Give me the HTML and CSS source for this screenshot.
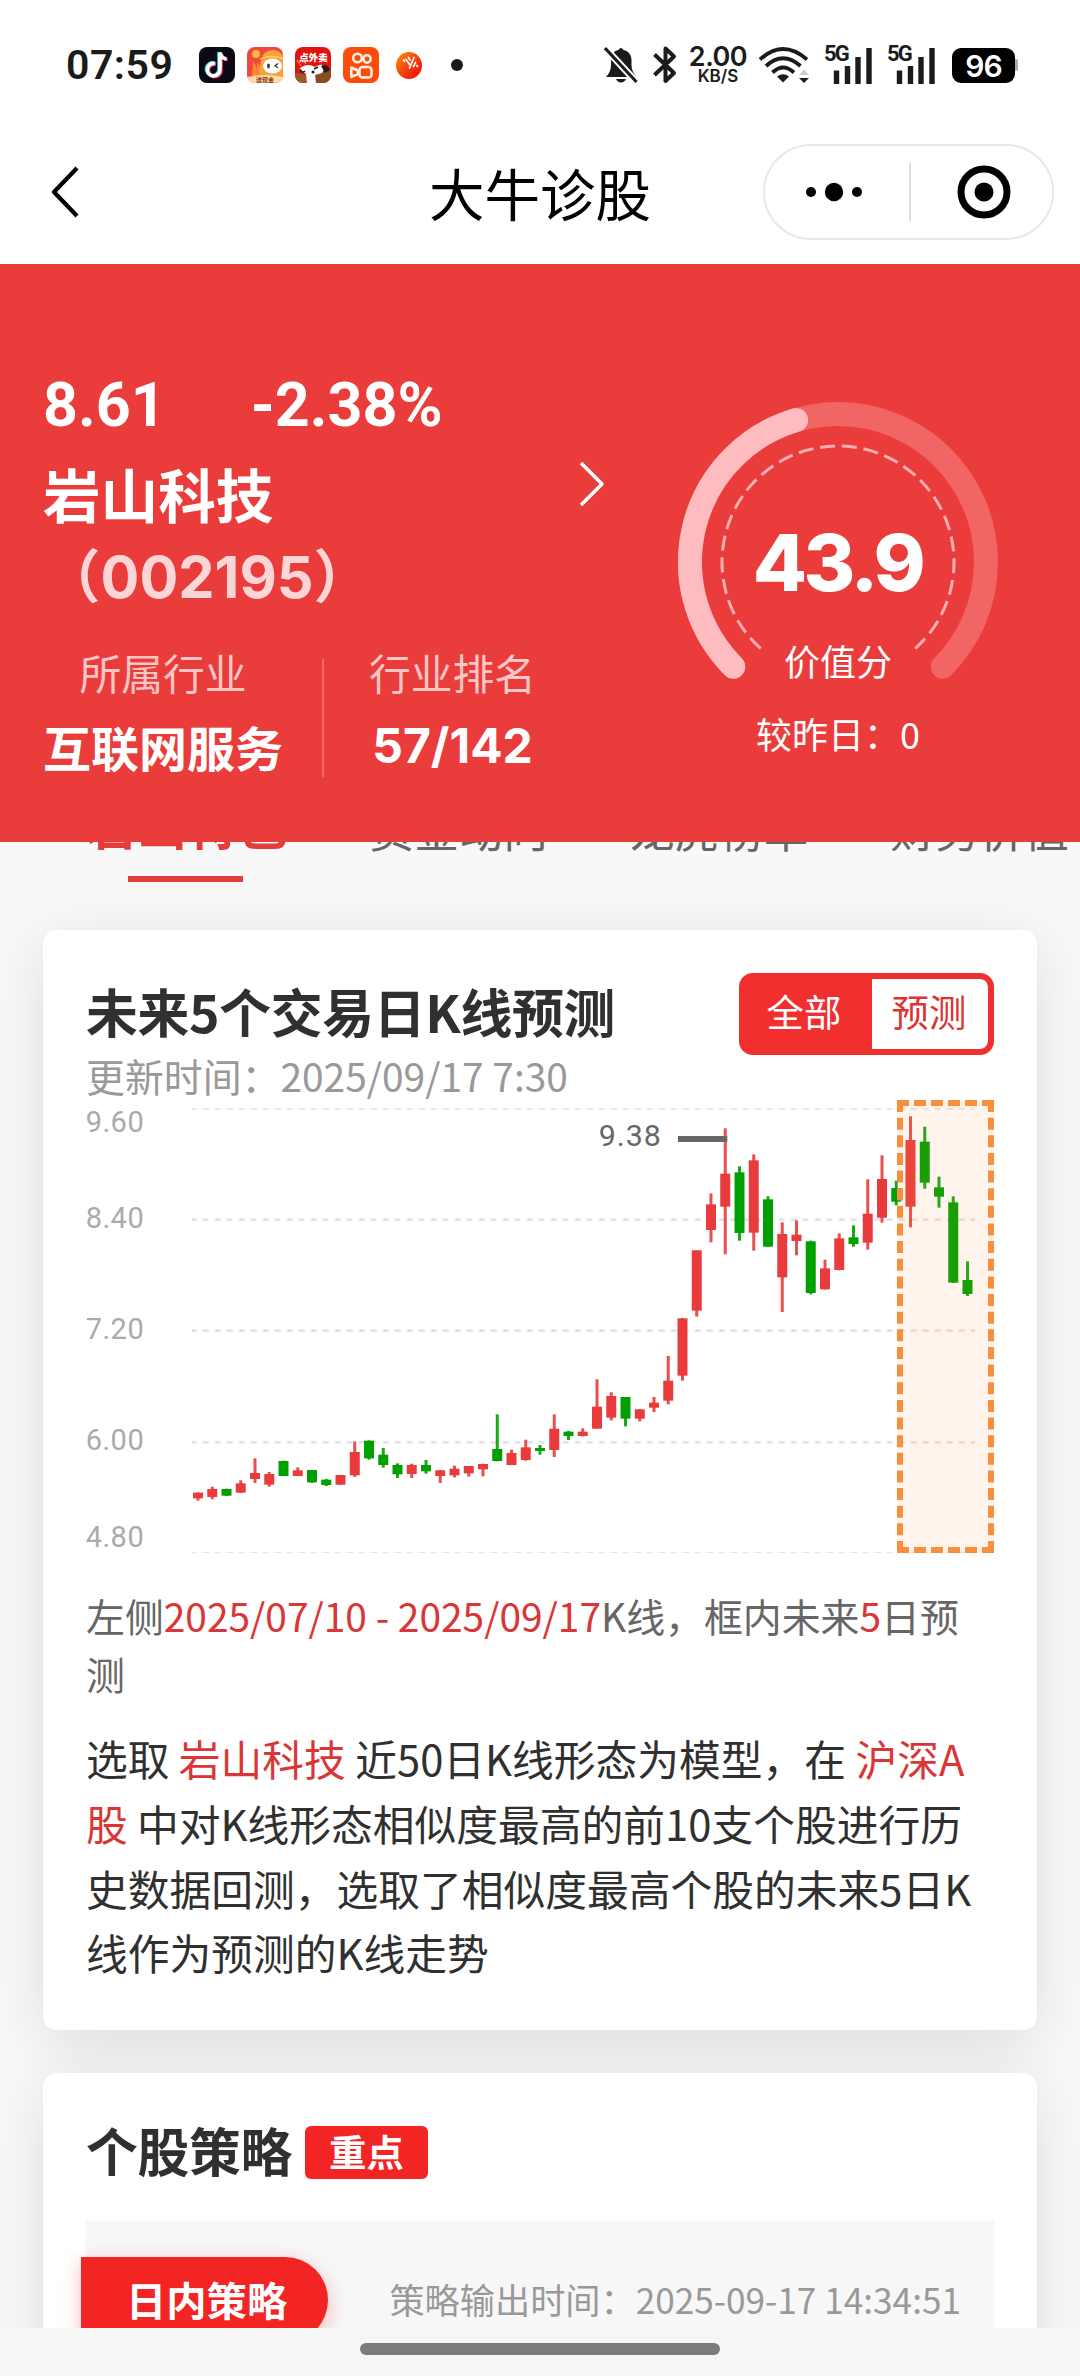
FILE: index.html
```html
<!DOCTYPE html>
<html lang="zh-CN">
<head>
<meta charset="utf-8">
<title>大牛诊股</title>
<link rel="stylesheet" href="styles.css">
</head>
<body>
<div class="screen">
  <header class="status">
    <span class="clock">07:59</span>
    <div class="apps">
      <svg class="app" viewBox="0 0 36 36"><rect width="36" height="36" rx="8" fill="#0b0a14"/><g fill="none" stroke-width="3.6"><path d="M16 16.500a6.300 6.300 0 1 0 5 6.200V5.500c.7 4 3 6 6.500 6.500" stroke="#29e3e3" transform="translate(-1 -.5)"/><path d="M16 16.500a6.300 6.300 0 1 0 5 6.200V5.500c.7 4 3 6 6.500 6.500" stroke="#f5325b" transform="translate(1 .8)"/><path d="M16 16.500a6.300 6.300 0 1 0 5 6.200V5.500c.7 4 3 6 6.500 6.500" stroke="#fff"/></g></svg>
      <svg class="app" viewBox="0 0 36 36"><defs><clipPath id="r"><rect width="36" height="36" rx="8"/></clipPath></defs><g clip-path="url(#r)"><rect width="36" height="36" fill="#f0473f"/><path d="M14 14q2-11 12-11 10 1 12 11v18H10z" fill="#f9a13c"/><path d="M6 14l3 5v10H5zM10 15l3 4v9h-4z" fill="#f78b33"/><circle cx="9" cy="7" r="4" fill="#ffb63d"/><path d="M13 12q12-5 24 0" fill="none" stroke="#fbd25e" stroke-width="1.500"/><ellipse cx="25.500" cy="19" rx="9.500" ry="7.500" fill="#fff"/><ellipse cx="21.500" cy="19" rx="1.400" ry="2.400" fill="#333"/><path d="M31 16.500l-3 2.300 3 2" fill="none" stroke="#333" stroke-width="1.300"/><path d="M0 30q18-4 36 0v6H0z" fill="#fddca0"/><text x="18" y="35" text-anchor="middle" class="app-cash">送现金</text></g></svg>
      <svg class="app" viewBox="0 0 36 36"><g clip-path="url(#r)"><rect width="36" height="36" fill="#e3120f"/><path d="M0 26l12 2 10 8H0z" fill="#9a5a2c"/><path d="M20 27l16-5v14H18z" fill="#8a4c22"/><path d="M4 22q8-7 16-2 8-5 10 1l-3 5-7 2 1 8H12l-1-9z" fill="#fff"/><path d="M26 19q6-3 9 4l-5 3z" fill="#2b1a16"/><path d="M19 22l4-2M5 22q2 5 5 2" stroke="#221" stroke-width="1.500" fill="none"/><circle cx="18" cy="25" r="1.500" fill="#221"/><path d="M2 13l4 6M9 14l2 3" stroke="#f4a13a" stroke-width="1.300"/><text x="18.500" y="13.500" text-anchor="middle" class="app-food">点外卖</text></g></svg>
      <svg class="app" viewBox="0 0 36 36"><rect width="36" height="36" rx="8" fill="#fd4b0b"/><g fill="none" stroke="#fff3e6" stroke-width="2.500"><circle cx="14.500" cy="11" r="4.300"/><circle cx="24" cy="12" r="3.700"/><rect x="16.500" y="20" width="12" height="10.500" rx="3"/><path d="M8.300 20.500v9.500l6.500-3v-3.500z" stroke-linejoin="round"/></g></svg>
      <svg class="app app-wave" viewBox="0 0 26 27"><defs><linearGradient id="o" x1="0" y1="0" x2="1" y2="1"><stop offset=".15" stop-color="#fb7a10"/><stop offset=".75" stop-color="#f0200c"/></linearGradient></defs><ellipse cx="13" cy="13.500" rx="13" ry="13.500" fill="url(#o)"/><path d="M7.500 8l1 1.300M10 7.500l3.500 5M13.500 16L18 5.500M14 8l-1.500-2.500M17.500 14.500l2-4M21 13.500l.5 1" stroke="#fff" stroke-width="1.700" stroke-linecap="round" fill="none"/></svg>
    </div>
    <span class="more-dot"></span>
    <div class="system">
      <svg class="bell" viewBox="0 0 34 36" width="34" height="36"><g fill="#1b1b1b"><path d="M17 1c1 0 2 1 2.500 2 5 1 8 5 8 10v5c0 5 2 8 5 12H2c3-3 5-7 5-12v-5C7 8 9 4 14.500 3 15 2 16 1 17 1z"/><path d="M12 32h10c-1 2.500-3 3.500-5 3.500s-4-1-5-3.500z"/></g><path d="M1 1L32.500 35" stroke="#fff" stroke-width="7"/><path d="M1 1L32.500 35" stroke="#1b1b1b" stroke-width="3"/></svg>
      <svg class="bt" viewBox="0 0 24 38" width="24" height="38"><path d="M1.500 8.500L21 27 12.500 35V2.500L21 10.500 1.500 29" fill="none" stroke="#1b1b1b" stroke-width="4" stroke-linejoin="round"/></svg>
      <span class="speed"><b>2.00</b><i>KB/S</i></span>
      <svg class="wifi" viewBox="0 0 50 36" width="50" height="36"><g fill="none" stroke="#1b1b1b" stroke-width="3.800"><path d="M1 12.500Q24 -8.500 48 12.500"/><path d="M7 19Q24 3.500 41.500 19"/><path d="M13.500 25.500Q24 15.500 35 25.500"/></g><path d="M18 29.500q6-4.500 12 0l-6 6z" fill="#1b1b1b"/><path d="M40 28l5-5.500 5 5.500z" fill="#ccc"/><path d="M40 31h10l-5 5z" fill="#1b1b1b"/></svg>
      <span class="signal"><em>5G</em><svg viewBox="0 0 48 37" width="48" height="37"><path d="M12.500 23.500V37M23.500 19V37M34 10V37M45 1V37" stroke="#1b1b1b" stroke-width="5.400"/></svg></span>
      <span class="signal"><em>5G</em><svg viewBox="0 0 48 37" width="48" height="37"><path d="M12.500 23.500V37M23.500 19V37M34 10V37M45 1V37" stroke="#1b1b1b" stroke-width="5.400"/></svg></span>
      <span class="battery">96</span><span class="nub"></span>
    </div>
  </header>

  <nav class="nav">
    <svg class="back" viewBox="0 0 28 52" width="28" height="52"><path d="M26 2L3 26l23 24" fill="none" stroke="#000" stroke-width="4.200" stroke-linejoin="round"/></svg>
    <h1 class="nav-title">大牛诊股</h1>
    <div class="capsule">
      <svg viewBox="0 0 56 20" width="56" height="20"><circle cx="5" cy="10" r="5"/><circle cx="28" cy="10" r="9.200"/><circle cx="51" cy="10" r="5"/></svg>
      <span class="capsule-line"></span>
      <svg viewBox="0 0 54 54" width="54" height="54"><circle cx="27" cy="27" r="23" fill="none" stroke="#000" stroke-width="7"/><circle cx="27" cy="27" r="9.500"/></svg>
    </div>
  </nav>

  <section class="hero">
    <div class="stock">
      <div class="quote"><span class="price">8.61</span><span class="change">-2.38%</span></div>
      <div class="name-row">
        <div class="name">岩山科技<br><span class="code">（<span class="code-num">002195</span>）</span></div>
        <svg class="go" viewBox="0 0 26 46" width="26" height="46"><path d="M2 2l21 21L2 44" fill="none" stroke="#fff" stroke-width="3.500" stroke-linejoin="round"/></svg>
      </div>
      <div class="stats">
        <div class="stat"><span class="stat-label">所属行业</span><b class="stat-value">互联网服务</b></div>
        <span class="stat-line"></span>
        <div class="stat"><span class="stat-label">行业排名</span><b class="stat-value stat-rank">57/142</b></div>
      </div>
    </div>
    <div class="gauge">
      <svg class="gauge-ring" viewBox="-160 -160 320 320" width="320" height="320" fill="none">
        <path d="M-104.700 104.700A148 148 0 1 1 104.700 104.700" stroke="#f16564" stroke-width="24" stroke-linecap="round"/>
        <path d="M-104.700 104.700A148 148 0 0 1 -41.800 -142" stroke="#febbc0" stroke-width="24" stroke-linecap="round"/>
        <path d="M-77.300 86.500A116 116 0 1 1 77.300 86.500" stroke="#fdaeb0" stroke-width="3" stroke-dasharray="15 6.800"/>
      </svg>
      <div class="gauge-text">
        <b class="score">43.9</b>
        <span class="score-label">价值分</span>
        <span class="score-diff">较昨日：0</span>
      </div>
    </div>
  </section>

  <main class="content">
    <div class="tabs">
      <span class="tab tab-on">岩山特色</span>
      <span class="tab">资金动向</span>
      <span class="tab">龙虎榜单</span>
      <span class="tab">财务价值</span>
    </div>

    <section class="card forecast">
      <div class="card-head">
        <div>
          <h2 class="card-title">未来5个交易日K线预测</h2>
          <p class="updated">更新时间：2025/09/17 7:30</p>
        </div>
        <div class="toggle"><span class="toggle-on">全部</span><span class="toggle-off">预测</span></div>
      </div>
      <div class="chart">
        <svg id="kline" viewBox="0 60 2724 1359" width="908" height="453">
          <g class="grid">
            <path class="thin" d="M318 87H2667M318 1417H2667"/>
            <path d="M318 419H2667M318 752H2667M318 1087H2667"/>
          </g>
          <g class="axis">
            <text x="-1" y="155">9.60</text><text x="-1" y="443">8.40</text><text x="-1" y="778">7.20</text><text x="-1" y="1111">6.00</text><text x="-1" y="1400">4.80</text>
          </g>
          <g id="candles"></g>
          <text class="peak" x="1538" y="199">9.38</text>
          <path class="peak-line" d="M1776 177H1924"/>
        </svg>
        <div class="predict-box"></div>
      </div>
      <p class="range">左侧<em>2025/07/10 - 2025/09/17</em>K线，框内未来<em>5</em>日预<br>测</p>
      <p class="explain">选取 <em>岩山科技</em> 近50日K线形态为模型，在 <em>沪深A<br>股</em> 中对K线形态相似度最高的前10支个股进行历<br>史数据回测，选取了相似度最高个股的未来5日K<br>线作为预测的K线走势</p>
    </section>

    <section class="card strategy">
      <div class="strategy-head"><h2 class="card-title">个股策略</h2><span class="badge">重点</span></div>
      <div class="panel">
        <span class="ribbon">日内策略</span>
        <span class="panel-time">策略输出时间：2025-09-17 14:34:51</span>
      </div>
    </section>
  </main>

  <footer class="home"><span class="home-pill"></span></footer>
</div>
<script src="chart.js"></script>
</body>
</html>
```

FILE: styles.css
```css
* { box-sizing: border-box; margin: 0; padding: 0; }
body { font-family: "Noto Sans CJK SC", sans-serif; color: #333; background: #fff; }
em, i { font-style: normal; }
svg { display: block; flex: none; }
.screen { width: 1080px; height: 2376px; display: flex; flex-direction: column; overflow: hidden; white-space: nowrap; }

/* status bar */
.status { height: 128px; display: flex; align-items: center; padding: 2px 62px 0 66px; color: #1b1b1b; flex: none; }
.clock { font: 600 41px/48px Roboto, sans-serif; width: 133px; letter-spacing: .5px; }
.apps { display: flex; align-items: center; gap: 12px; }
.app { width: 36px; height: 36px; }
.app-wave { width: 26px; height: 27px; margin-left: 5px; }
.app-cash { font-size: 6px; font-weight: 700; fill: #8a3a14; }
.app-food { font-size: 9.5px; font-weight: 900; fill: #fff; }
.more-dot { width: 12px; height: 12px; border-radius: 50%; background: #1b1b1b; margin-left: 29px; }
.system { display: flex; align-items: center; margin-left: auto; }
.bt { margin-left: 15px; }
.speed { width: 60px; margin-left: 11px; text-align: center; font-family: Inter, sans-serif; display: flex; flex-direction: column; font-weight: 600; }
.speed b { font-size: 27px; line-height: 22px; font-weight: 600; letter-spacing: -.5px; }
.speed i { font-size: 17px; line-height: 17px; }
.wifi { margin-left: 11px; }
.signal { position: relative; margin-left: 15px; }
.signal em { position: absolute; left: 0; top: -3px; font: 700 22px/20px Roboto, sans-serif; letter-spacing: -1.800px; }
.battery { width: 63px; height: 35px; margin-left: 17px; border-radius: 9px; background: #000; color: #fff; font: 600 30px/36px Inter, sans-serif; text-align: center; letter-spacing: -1px; }
.nub { width: 3px; height: 12px; background: #aaa; border-radius: 0 2px 2px 0; }

/* title bar */
.nav { height: 136px; flex: none; display: flex; align-items: center; padding: 0 26px 8px 51px; }
.nav-title { font-size: 55.500px; line-height: 80px; font-weight: 400; color: #000; margin: 0 auto 0 350px; }
.capsule { width: 291px; height: 96px; border: 2px solid #e8e8e8; border-radius: 48px; display: flex; align-items: center; justify-content: space-between; padding: 0 41px; }
.capsule-line { width: 1.500px; height: 58px; background: #ddd; margin-right: -1px; }

/* red summary */
.hero { height: 578px; flex: none; background: #ea3c3b; color: #fff; display: flex; justify-content: space-between; padding: 0 82px 0 43px; }
.stock { width: 562px; padding-top: 101px; }
.quote { height: 80px; font: 700 61px/80px Roboto, sans-serif; display: flex; gap: 85px; }
.name-row { display: flex; justify-content: space-between; margin-top: 8px; }
.name { font-size: 57.600px; line-height: 80px; font-weight: 700; }
.code { color: #fcd6d6; }
.code-num { font-family: Inter, sans-serif; }
.go { margin-top: 8px; }
.stats { display: flex; margin-top: 26px; }
.stat { display: flex; flex-direction: column; align-items: center; }
.stat-label { font-size: 41.760px; line-height: 58px; color: #fac6c6; }
.stat-value { font-size: 48px; line-height: 90px; }
.stat-rank { font-family: Inter, sans-serif; }
.stat-line { width: 2px; height: 118px; background: #f06b6a; margin: 16px 45px 0 39px; }
.gauge { width: 320px; padding-top: 138px; display: grid; grid-template-rows: 320px; }
.gauge-ring, .gauge-text { grid-area: 1 / 1; }
.gauge-text { display: flex; flex-direction: column; align-items: center; padding-top: 110px; }
.score { font: 800 79px/100px Inter, sans-serif; letter-spacing: -3.500px; margin-right: 1px; }
.score-label { font-size: 36px; line-height: 50px; margin-top: 23px; }
.score-diff { font-size: 36px; line-height: 50px; margin-top: 23px; }

/* scrolled content */
.content { flex: 1; min-height: 0; overflow: hidden; background: #f8f8f8; display: flex; flex-direction: column; gap: 43px; padding: 0 43px; }
.tabs { height: 88px; flex: none; margin: 0 -43px -43px 0; display: flex; gap: 82px; padding-left: 43px; overflow: hidden; }
.tab { font-size: 44.600px; line-height: 64px; height: 40px; color: #666; margin-top: -45px; flex: none; }
.tab-on { font-size: 50.400px; font-weight: 700; color: #e33c3b; position: relative; margin-top: -50px; }
.tab-on::after { content: ""; position: absolute; left: 42px; top: 84px; width: 115px; height: 6px; background: #e33c3b; }
.card { background: #fff; border-radius: 14px; box-shadow: 0 14px 60px rgba(0, 0, 0, .11); padding: 43px; flex: none; }
.forecast { height: 1100px; }
.card-head { display: flex; justify-content: space-between; height: 127px; }
.card-title { font-size: 51.800px; line-height: 76px; font-weight: 700; color: #303030; letter-spacing: -.3px; }
.updated { font-size: 38.900px; line-height: 52px; color: #999; }
.toggle { width: 255px; height: 82px; border: 6px solid #f22f2f; border-radius: 14px; display: flex; font-size: 37.400px; line-height: 65px; text-align: center; overflow: hidden; background: #f22f2f; }
.toggle-on { width: 127px; padding-right: 9px; color: #fff; }
.toggle-off { flex: 1; color: #d33; background: #fff; border-radius: 0 7px 7px 0; padding-right: 2px; }
.chart { position: relative; height: 453px; }
.grid path { stroke: #e4e4e4; stroke-width: 8; stroke-dasharray: 18 18; stroke-dashoffset: 4; }
.grid .thin { stroke-width: 4; }
.axis text { font: 87px Roboto, sans-serif; fill: #aaa; letter-spacing: 1.500px; }
.peak { font: 91px Roboto, sans-serif; fill: #666; letter-spacing: 3px; }
.peak-line { stroke: #666; stroke-width: 18; }
.up { stroke: #e93b3b; }
.down { stroke: #00a000; }
.body { stroke-width: 30; }
.wick { stroke-width: 9; opacity: .9; }
.predict-box { position: absolute; right: 0; top: 0; width: 97px; height: 453px; border: 6px dashed #f98f3c; background: rgba(249, 143, 60, .1); }
.range { font-size: 38.900px; line-height: 58px; color: #666; margin-top: 33px; }
.range em, .explain em { color: #d93636; }
.explain { font-size: 41.760px; line-height: 64.800px; margin-top: 24px; color: #303030; }

.strategy { height: 400px; }
.strategy-head { display: flex; align-items: center; height: 76px; margin-top: -4px; }
.badge { margin-left: 13px; width: 123px; height: 53px; border-radius: 6px; background: #f32424; color: #fff; font-weight: 700; font-size: 37.400px; line-height: 50px; text-align: center; margin-top: 4px; }
.panel { margin-top: 33px; height: 200px; background: #f7f7f7; padding: 36px 33px 0 0; display: flex; justify-content: space-between; }
.ribbon { width: 247px; height: 86px; margin-left: -5px; background: #f32424; border-radius: 0 43px 43px 0; color: #fff; font-weight: 700; font-size: 40.300px; line-height: 84px; padding-left: 45px; box-shadow: 0 6px 20px rgba(243, 36, 36, .3); }
.panel-time { font-size: 35.200px; line-height: 84px; color: #999; }

.home { height: 48px; flex: none; background: #f6f6f6; display: flex; justify-content: center; padding-top: 15px; }
.home-pill { width: 360px; height: 12px; border-radius: 6px; background: #7b7b7b; }
```

FILE: chart.js
```js
// [direction, high, body top, body bottom, low]
const days = [
  ["up",1237,1238,1255,1262],["up",1220,1227,1251,1258],["down",1226,1227,1247,1248],["up",1201,1210,1238,1239],
  ["up",1135,1179,1197,1209],["up",1176,1182,1214,1220],["down",1142,1143,1188,1188],["up",1162,1171,1188,1188],
  ["down",1170,1170,1207,1209],["down",1197,1199,1215,1218],["up",1185,1185,1214,1215],["up",1084,1116,1186,1191],
  ["down",1081,1082,1135,1139],["down",1104,1124,1155,1163],["down",1150,1155,1183,1194],["up",1151,1155,1182,1194],
  ["down",1140,1155,1174,1181],["up",1170,1171,1188,1209],["up",1157,1166,1186,1192],["up",1158,1158,1180,1190],
  ["up",1151,1152,1168,1189],["down",1003,1107,1143,1144],["up",1109,1119,1155,1155],["up",1079,1102,1140,1142],
  ["down",1095,1104,1113,1124],["up",1003,1046,1110,1131],["down",1053,1055,1068,1080],["up",1045,1055,1068,1069],
  ["up",898,980,1046,1046],["up",937,948,1013,1021],["down",951,951,1016,1039],["up",987,988,1016,1024],
  ["up",951,968,983,996],["up",828,902,962,973],["up",714,715,887,902],["up",511,511,692,710],
  ["up",340,373,450,487],["up",145,281,380,523],["down",259,277,459,482],["up",223,241,458,512],
  ["down",349,358,500,500],["up",427,462,592,696],["up",421,464,483,526],["down",482,484,639,643],
  ["up",539,565,628,629],["up",460,475,570,571],["down",436,472,492,500],["up",298,401,488,509],
  ["up",226,297,413,428],["down",302,324,365,376],["up",109,180,380,442],["down",140,185,308,326],
  ["down",290,322,350,383],["down",349,367,608,609],["down",544,600,642,648]
];
const FIRST = 336, STEP = 42.75;
document.getElementById("candles").innerHTML = days.map(([dir, high, top, bottom, low], i) => {
  const x = FIRST + i * STEP;
  return `<path class="wick ${dir}" d="M${x} ${high}V${low}"/><path class="body ${dir}" d="M${x} ${top}V${bottom}"/>`;
}).join("");
```
